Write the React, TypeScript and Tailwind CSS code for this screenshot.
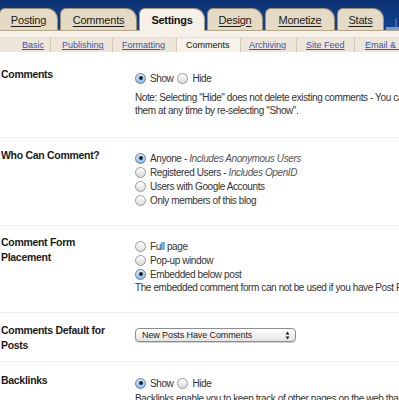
import React from "react";

function Radio({ checked }: { checked?: boolean }) {
  return checked ? (
    <span className="inline-flex w-[11px] h-[11px] shrink-0 rounded-full border border-[#5f7fa8] bg-linear-to-b from-[#dbe9f8] to-[#8fbbe9] items-center justify-center">
      <span className="block w-[4px] h-[4px] rounded-full bg-[#1c2430]" />
    </span>
  ) : (
    <span className="inline-block w-[11px] h-[11px] shrink-0 rounded-full border border-[#9a9a9a] bg-linear-to-b from-white to-[#dadada]" />
  );
}

function RadioLine({ checked, children }: { checked?: boolean; children: React.ReactNode }) {
  return (
    <div className="flex items-center h-[14px] gap-[4px] whitespace-nowrap">
      <Radio checked={checked} />
      <span>{children}</span>
    </div>
  );
}

const tabs = [
  { name: "Posting", w: "w-[59px]", extra: "ml-[-1px]" },
  { name: "Comments", w: "w-[77px]", extra: "" },
  { name: "Settings", w: "w-[66px]", extra: "", active: true },
  { name: "Design", w: "w-[56px]", extra: "" },
  { name: "Monetize", w: "w-[70px]", extra: "" },
  { name: "Stats", w: "w-[47px]", extra: "" },
];

const subtabs = [
  { name: "Basic", cls: "w-[51px] pl-[22px]" },
  { name: "Publishing", cls: "w-[62px] pl-[11px]" },
  { name: "Formatting", cls: "w-[64px] pl-[9px]" },
  { name: "Comments", cls: "w-[64px] pl-[9px]", active: true },
  { name: "Archiving", cls: "w-[56px] pl-[8px]" },
  { name: "Site Feed", cls: "w-[58px] pl-[9px]" },
  { name: "Email & Mobile", cls: "w-[120px] pl-[10px]" },
];

export default function App() {
  return (
    <div className="w-[399px] h-[400px] overflow-hidden bg-white font-['Liberation_Sans',Arial,sans-serif] text-[#333]">
      {/* Top tabs */}
      <div className="relative h-[30px] bg-linear-to-b from-[#0b3273] to-[#134393] flex items-end gap-[2px]">
        {tabs.map((t) => (
          <div
            key={t.name}
            className={
              t.active
                ? `${t.w} ${t.extra} relative z-10 mb-[-1px] h-[23px] rounded-tl-[6px] rounded-tr-[11px] border border-b-0 border-[#a79a7e] bg-[#f6f1e8] flex items-center justify-center text-[11px] font-bold tracking-[-0.3px] text-[#111]`
                : `${t.w} ${t.extra} h-[22px] rounded-tl-[6px] rounded-tr-[11px] border border-b-0 border-[#9c8e70] bg-[#e5dac4] flex items-center justify-center text-[11px] tracking-[-0.2px] text-[#1a1a1a] underline underline-offset-[2px]`
            }
          >
            <span className="pt-[1px]">{t.name}</span>
          </div>
        ))}
        <div className="absolute right-0 bottom-0 w-[13px] h-[3px] bg-[#6f9ad6]" />
        <span className="absolute right-[2px] top-[19px] text-[9px] leading-[9px] text-[#7aa5e0]">|</span>
      </div>
      {/* strip */}
      <div className="h-[7px] bg-[#f6f1e8] border-t border-[#b3a689]" />
      {/* subtabs */}
      <div className="h-[15px] bg-[#ede6d9] border-t border-[#e4dccd] flex text-[9px] leading-[14px] whitespace-nowrap">
        {subtabs.map((s) => (
          <div
            key={s.name}
            className={`${s.cls} shrink-0 border-r border-[#d3c8b2] ${s.active ? "bg-[#f7f3ec] text-[#111]" : "text-[#3355bb] underline"}`}
          >
            {s.name}
          </div>
        ))}
      </div>

      {/* Rows */}
      <div className="text-[10px] tracking-[-0.4px]">
        {/* Comments */}
        <div className="flex h-[86px] border-b border-[#ececec]">
          <div className="w-[135px] shrink-0 pl-[1px] pt-[15px]">
            <div className="w-[118px] text-[10.5px] leading-[15px] font-bold tracking-[-0.3px] text-[#1a1a1a]">Comments</div>
          </div>
          <div className="pt-[19px] whitespace-nowrap">
            <div className="flex items-center h-[14px] gap-[4px]">
              <Radio checked />
              <span>Show</span>
              <Radio />
              <span>Hide</span>
            </div>
            <div className="mt-[6px] leading-[13px]">
              Note: Selecting "Hide" does not delete existing comments - You can show
              <br />
              them at any time by re-selecting "Show".
            </div>
          </div>
        </div>

        {/* Who can comment */}
        <div className="flex h-[88px] border-b border-[#ececec]">
          <div className="w-[135px] shrink-0 pl-[1px] pt-[10px]">
            <div className="w-[118px] text-[10.5px] leading-[15px] font-bold tracking-[-0.3px] text-[#1a1a1a]">Who Can Comment?</div>
          </div>
          <div className="pt-[13px]">
            <RadioLine checked>
              Anyone - <i className="text-[#555]">Includes Anonymous Users</i>
            </RadioLine>
            <RadioLine>
              Registered Users - <i className="text-[#555]">Includes OpenID</i>
            </RadioLine>
            <RadioLine>Users with Google Accounts</RadioLine>
            <RadioLine>Only members of this blog</RadioLine>
          </div>
        </div>

        {/* Comment form placement */}
        <div className="flex h-[87px] border-b border-[#ececec]">
          <div className="w-[135px] shrink-0 pl-[1px] pt-[8.5px]">
            <div className="w-[118px] text-[10.5px] leading-[15px] font-bold tracking-[-0.3px] text-[#1a1a1a]">Comment Form Placement</div>
          </div>
          <div className="pt-[13px] whitespace-nowrap">
            <RadioLine>Full page</RadioLine>
            <RadioLine>Pop-up window</RadioLine>
            <RadioLine checked>Embedded below post</RadioLine>
            <div className="leading-[13px]">
              The embedded comment form can not be used if you have Post Pages disabled.
            </div>
          </div>
        </div>

        {/* Comments default */}
        <div className="flex h-[49px] border-b border-[#ececec]">
          <div className="w-[135px] shrink-0 pl-[1px] pt-[9.5px]">
            <div className="w-[118px] text-[10.5px] leading-[15px] font-bold tracking-[-0.3px] text-[#1a1a1a]">Comments Default for Posts</div>
          </div>
          <div className="pt-[15px]">
            <div className="w-[161px] h-[14px] rounded-[4px] border border-[#8d8d8d] bg-linear-to-b from-white to-[#e4e4e4] flex items-center justify-between pl-[6px] pr-[5px] shadow-[0_1px_0_#d0d0d0]">
              <span className="text-[9px] tracking-[-0.1px] text-[#1a1a1a] leading-[12px]">New Posts Have Comments</span>
              <svg width="5" height="9" viewBox="0 0 5 9">
                <path d="M2.5 0.5 L4.5 3.5 L0.5 3.5 Z" fill="#222" />
                <path d="M2.5 8.5 L4.5 5.5 L0.5 5.5 Z" fill="#222" />
              </svg>
            </div>
          </div>
        </div>

        {/* Backlinks */}
        <div className="flex h-[60px]">
          <div className="w-[135px] shrink-0 pl-[1px] pt-[10.5px]">
            <div className="w-[118px] text-[10.5px] leading-[15px] font-bold tracking-[-0.3px] text-[#1a1a1a]">Backlinks</div>
          </div>
          <div className="pt-[14px] whitespace-nowrap">
            <div className="flex items-center h-[14px] gap-[4px]">
              <Radio checked />
              <span>Show</span>
              <Radio />
              <span>Hide</span>
            </div>
            <div className="mt-[1.5px] leading-[13px]">
              Backlinks enable you to keep track of other pages on the web that link to your posts.
            </div>
          </div>
        </div>
      </div>
    </div>
  );
}
